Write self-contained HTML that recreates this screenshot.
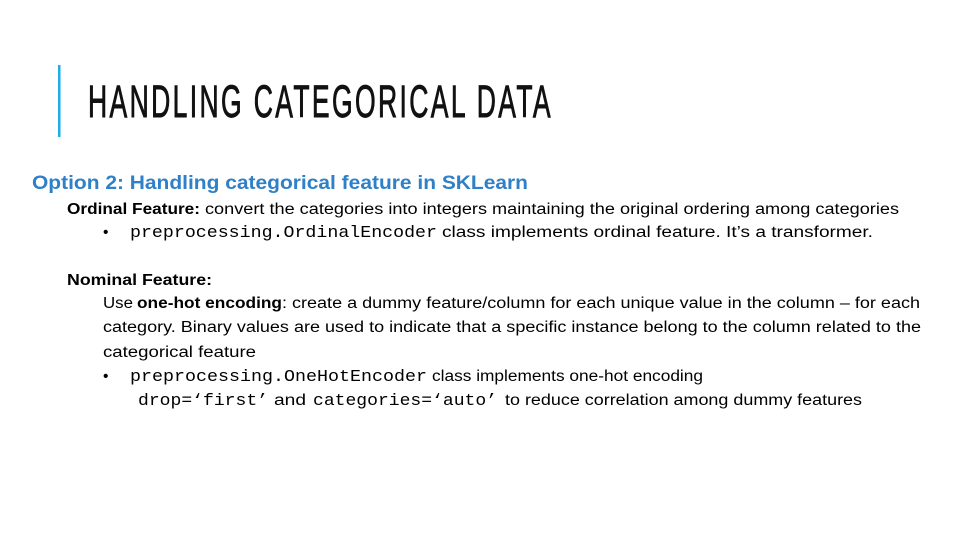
<!DOCTYPE html>
<html><head><meta charset="utf-8"><style>
html,body{margin:0;padding:0;background:#fff;}
svg{display:block}
</style></head><body>
<svg width="960" height="540" viewBox="0 0 960 540" xmlns="http://www.w3.org/2000/svg">
<rect width="960" height="540" fill="#fff"/>
<rect x="58" y="65" width="2.5" height="72" fill="#1caee8"/>
<text x="88" y="117" font-family="Liberation Sans, sans-serif" font-size="45" letter-spacing="4" fill="#111" stroke="#111" stroke-width="0.9" textLength="465" lengthAdjust="spacingAndGlyphs">HANDLING CATEGORICAL DATA</text>
<g font-family="Liberation Sans, sans-serif" fill="#000">
<text x="32" y="189" font-size="19" font-weight="bold" fill="#2f80c6" textLength="496" lengthAdjust="spacingAndGlyphs">Option 2: Handling categorical feature in SKLearn</text>
<text y="214" font-size="15.5"><tspan x="67" font-weight="bold" textLength="133" lengthAdjust="spacingAndGlyphs">Ordinal Feature:</tspan><tspan x="205" textLength="694" lengthAdjust="spacingAndGlyphs">convert the categories into integers maintaining the original ordering among categories</tspan></text>
<text y="237" font-size="15.5"><tspan x="103">•</tspan><tspan x="130" font-family="Liberation Mono, monospace" font-size="17" textLength="307" lengthAdjust="spacingAndGlyphs">preprocessing.OrdinalEncoder</tspan><tspan x="442" textLength="431" lengthAdjust="spacingAndGlyphs">class implements ordinal feature. It’s a transformer.</tspan></text>
<text x="67" y="285" font-size="15.5" font-weight="bold" textLength="145" lengthAdjust="spacingAndGlyphs">Nominal Feature:</text>
<text y="308" font-size="15.5"><tspan x="103" textLength="30" lengthAdjust="spacingAndGlyphs">Use</tspan><tspan x="137" font-weight="bold" textLength="145" lengthAdjust="spacingAndGlyphs">one-hot encoding</tspan><tspan x="282" textLength="638" lengthAdjust="spacingAndGlyphs">: create a dummy feature/column for each unique value in the column – for each</tspan></text>
<text x="103" y="332" font-size="15.5" textLength="818" lengthAdjust="spacingAndGlyphs">category. Binary values are used to indicate that a specific instance belong to the column related to the</text>
<text x="103" y="357" font-size="15.5" textLength="153" lengthAdjust="spacingAndGlyphs">categorical feature</text>
<text y="381" font-size="15.5"><tspan x="103">•</tspan><tspan x="130" font-family="Liberation Mono, monospace" font-size="17" textLength="297" lengthAdjust="spacingAndGlyphs">preprocessing.OneHotEncoder</tspan><tspan x="432" textLength="271" lengthAdjust="spacingAndGlyphs">class implements one-hot encoding</tspan></text>
<text y="405" font-size="15.5"><tspan x="138" font-family="Liberation Mono, monospace" font-size="17" textLength="130" lengthAdjust="spacingAndGlyphs">drop=‘first’</tspan><tspan x="274" textLength="32" lengthAdjust="spacingAndGlyphs">and</tspan><tspan x="313" font-family="Liberation Mono, monospace" font-size="17" textLength="184" lengthAdjust="spacingAndGlyphs">categories=‘auto’</tspan><tspan x="505" textLength="357" lengthAdjust="spacingAndGlyphs">to reduce correlation among dummy features</tspan></text>
</g>
</svg>
</body></html>
